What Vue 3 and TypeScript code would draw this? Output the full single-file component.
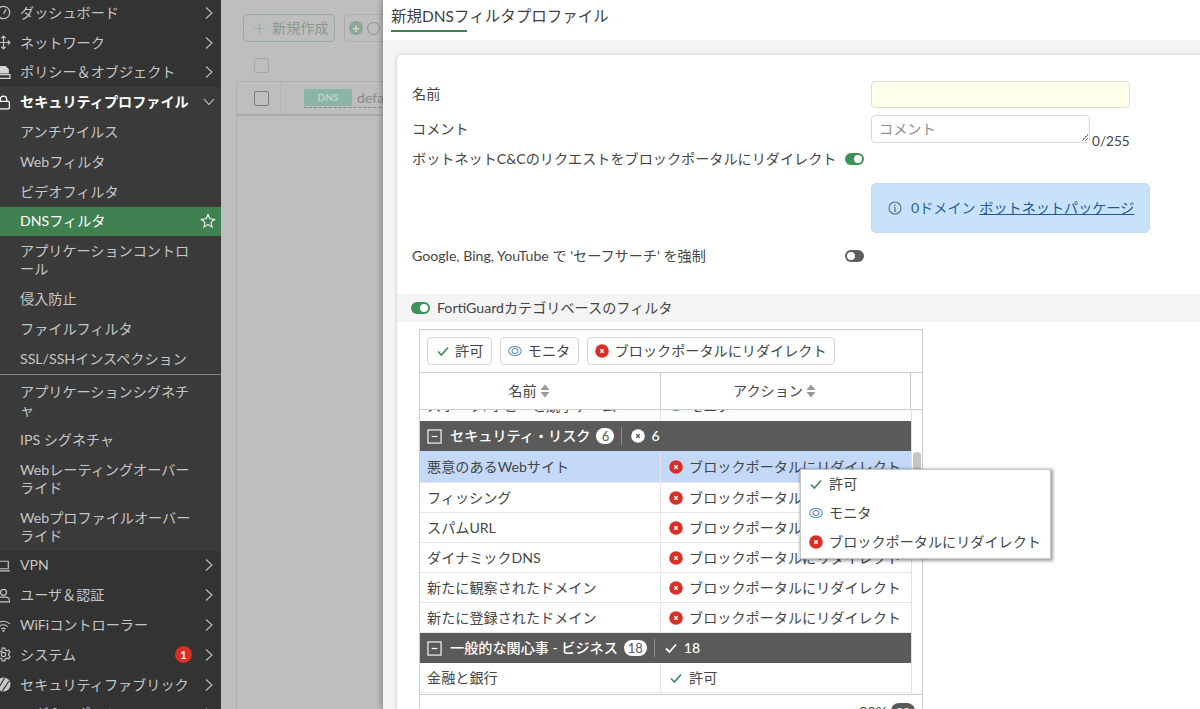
<script setup lang="ts">
interface NavItem {
  label: string
  icon?: string
  badge?: number
}

const topItems: NavItem[] = [
  { label: 'ダッシュボード', icon: 'i-dash' },
  { label: 'ネットワーク', icon: 'i-move' },
  { label: 'ポリシー＆オブジェクト', icon: 'i-policy' },
]
const subItems = [
  'アンチウイルス',
  'Webフィルタ',
  'ビデオフィルタ',
  'DNSフィルタ',
  'アプリケーションコントロール',
  '侵入防止',
  'ファイルフィルタ',
  'SSL/SSHインスペクション',
]
const subItems2 = [
  'アプリケーションシグネチャ',
  'IPS シグネチャ',
  'Webレーティングオーバーライド',
  'Webプロファイルオーバーライド',
]
const bottomItems: NavItem[] = [
  { label: 'VPN', icon: 'i-laptop' },
  { label: 'ユーザ＆認証', icon: 'i-user' },
  { label: 'WiFiコントローラー', icon: 'i-wifi' },
  { label: 'システム', icon: 'i-gear', badge: 1 },
  { label: 'セキュリティファブリック', icon: 'i-fabric' },
  { label: 'ログ＆レポート', icon: 'i-log' },
]
const riskRows = [
  '悪意のあるWebサイト',
  'フィッシング',
  'スパムURL',
  'ダイナミックDNS',
  '新たに観察されたドメイン',
  '新たに登録されたドメイン',
]
</script>

<template>
  <div class="page">
    <svg class="defs" width="0" height="0">
      <symbol id="i-check" viewBox="0 0 14 14">
        <path d="M2 7.5 5.4 11 12 3.5" fill="none" stroke="#3c8a52" stroke-width="1.6" />
      </symbol>
      <symbol id="i-check-w" viewBox="0 0 14 14">
        <path d="M2 7.5 5.4 11 12 3.5" fill="none" stroke="#fff" stroke-width="1.8" />
      </symbol>
      <symbol id="i-eye" viewBox="0 0 16 14">
        <ellipse cx="8" cy="7" rx="7.2" ry="5.2" fill="none" stroke="#5c93c9" stroke-width="1.2" />
        <ellipse cx="8" cy="7" rx="3.4" ry="2.8" fill="none" stroke="#5c93c9" stroke-width="1.2" />
      </symbol>
      <symbol id="i-block" viewBox="0 0 14 14">
        <circle cx="7" cy="7" r="6.8" fill="#d92f25" />
        <path d="M5.3 5.3 8.7 8.7M8.7 5.3 5.3 8.7" stroke="#fff" stroke-width="1.4" />
      </symbol>
      <symbol id="i-block-w" viewBox="0 0 14 14">
        <circle cx="7" cy="7" r="6.8" fill="#fff" />
        <path d="M5.3 5.3 8.7 8.7M8.7 5.3 5.3 8.7" stroke="#5a5a5a" stroke-width="1.4" />
      </symbol>
      <symbol id="i-minus" viewBox="0 0 16 16">
        <rect x="1" y="1" width="14" height="14" fill="none" stroke="#fff" stroke-width="1.2" />
        <path d="M5 8h6" stroke="#fff" stroke-width="1.3" />
      </symbol>
      <symbol id="i-sort" viewBox="0 0 10 14">
        <path d="M5 .5 9.500 6H.5zM5 13.500.5 8h9z" fill="#999" />
      </symbol>
      <symbol id="i-chevron" viewBox="0 0 8 14">
        <path d="M1 1.5 7 7 1 12.5" fill="none" stroke="#bdbdbd" stroke-width="1.1" />
      </symbol>
      <symbol id="i-chevron-d" viewBox="0 0 12 8">
        <path d="M1 1 6 6.5 11 1" fill="none" stroke="#d0d0d0" stroke-width="1.1" />
      </symbol>
      <symbol id="i-dash" viewBox="0 0 14 14">
        <circle cx="7" cy="7" r="5.8" fill="none" stroke="#c4c4c4" stroke-width="1.2" />
        <path d="M7 8 9.5 4" stroke="#c4c4c4" stroke-width="1.2" />
      </symbol>
      <symbol id="i-move" viewBox="0 0 14 14">
        <path d="M7 1v12M1 7h12M5 3l2-2 2 2M5 11l2 2 2-2M3 5 1 7l2 2M11 5l2 2-2 2" fill="none" stroke="#c4c4c4" stroke-width="1.1" />
      </symbol>
      <symbol id="i-policy" viewBox="0 0 14 14">
        <path d="M2 1h7l3 3v4H2z" fill="#d4d4d4" />
        <path d="M1 9h12v3.5H1z" fill="none" stroke="#d4d4d4" stroke-width="1.2" />
      </symbol>
      <symbol id="i-lock" viewBox="0 0 14 14">
        <rect x="1.5" y="6" width="11" height="7" rx="1" fill="none" stroke="#fff" stroke-width="1.2" />
        <path d="M4 6V4a3 3 0 0 1 6 0v2" fill="none" stroke="#fff" stroke-width="1.2" />
      </symbol>
      <symbol id="i-laptop" viewBox="0 0 14 14">
        <path d="M2.5 3h9v7h-9zM1 12h12" fill="none" stroke="#c4c4c4" stroke-width="1.1" />
      </symbol>
      <symbol id="i-user" viewBox="0 0 14 14">
        <circle cx="7" cy="4" r="2.8" fill="none" stroke="#c4c4c4" stroke-width="1.1" />
        <path d="M1.5 13v-1.5a3 3 0 0 1 3-3h5a3 3 0 0 1 3 3V13z" fill="none" stroke="#c4c4c4" stroke-width="1.1" />
      </symbol>
      <symbol id="i-wifi" viewBox="0 0 14 14">
        <path d="M1 5.5a8.500 8.500 0 0 1 12 0M3 8a5.600 5.600 0 0 1 8 0M5 10.300a2.800 2.800 0 0 1 4 0" fill="none" stroke="#c4c4c4" stroke-width="1.1" />
        <circle cx="7" cy="12" r="1" fill="#c4c4c4" />
      </symbol>
      <symbol id="i-gear" viewBox="0 0 14 14">
        <circle cx="7" cy="7" r="2" fill="none" stroke="#c4c4c4" stroke-width="1.1" />
        <path d="M5.800 1h2.400l.4 1.800 1.500.8 1.700-.6 1.200 2.100-1.300 1.200v1.400l1.300 1.200-1.200 2.100-1.700-.6-1.500.8-.4 1.800H5.800l-.4-1.800-1.500-.8-1.700.6L1 9.900l1.300-1.200V7.300L1 6.100l1.200-2.100 1.700.6 1.500-.8z" fill="none" stroke="#c4c4c4" stroke-width="1.1" />
      </symbol>
      <symbol id="i-fabric" viewBox="0 0 14 14">
        <circle cx="7" cy="7" r="6.500" fill="#c8c8c8" />
        <path d="M2 11 8 1M6 13l6-9" stroke="#333" stroke-width="1.1" />
      </symbol>
      <symbol id="i-log" viewBox="0 0 14 14">
        <path d="M2 12h10M3 3h8v7H3z" fill="none" stroke="#c4c4c4" stroke-width="1.1" />
      </symbol>
      <symbol id="i-star" viewBox="0 0 16 16">
        <path d="M8 1.500 9.900 5.800l4.600.5-3.400 3.100 1 4.600L8 11.600 3.900 14l1-4.600L1.500 6.300l4.600-.5z" fill="none" stroke="#fff" stroke-width="1.1" />
      </symbol>
      <symbol id="i-info" viewBox="0 0 14 14">
        <circle cx="7" cy="7" r="6" fill="none" stroke="#5f6f80" stroke-width="1.1" />
        <path d="M7 6.200v4M5.800 10.300h2.400M5.800 6.200H7" fill="none" stroke="#5f6f80" stroke-width="1.1" />
        <circle cx="7" cy="4" r=".8" fill="#5f6f80" />
      </symbol>
      <symbol id="i-plus" viewBox="0 0 14 14">
        <path d="M7 1v12M1 7h12" stroke="#98b5a2" stroke-width="1.3" />
      </symbol>
    </svg>

    <aside class="sidebar">
      <div class="nav-top">
        <div v-for="item in topItems" :key="item.label" class="nav-row">
          <svg class="nav-icon"><use :href="'#' + item.icon" /></svg>
          <span class="nav-label">{{ item.label }}</span>
          <svg class="chevron"><use href="#i-chevron" /></svg>
        </div>
      </div>

      <div class="nav-open">
        <div class="nav-row nav-row-open">
          <svg class="nav-icon"><use href="#i-lock" /></svg>
          <span class="nav-label">セキュリティプロファイル</span>
          <svg class="chevron-down"><use href="#i-chevron-d" /></svg>
        </div>
        <div
          v-for="sub in subItems"
          :key="sub"
          class="sub-row"
          :class="{ active: sub === 'DNSフィルタ' }"
        >
          <span class="sub-label">{{ sub }}</span>
          <svg v-if="sub === 'DNSフィルタ'" class="star"><use href="#i-star" /></svg>
        </div>
        <div class="nav-sep"></div>
        <div v-for="sub in subItems2" :key="sub" class="sub-row">
          <span class="sub-label">{{ sub }}</span>
        </div>
      </div>

      <div v-for="item in bottomItems" :key="item.label" class="nav-row">
        <svg class="nav-icon"><use :href="'#' + item.icon" /></svg>
        <span class="nav-label">{{ item.label }}</span>
        <span v-if="item.badge" class="nav-badge">{{ item.badge }}</span>
        <svg class="chevron"><use href="#i-chevron" /></svg>
      </div>
    </aside>

    <section class="backdrop">
      <div class="toolbar">
        <div class="new-btn">
          <svg class="new-plus"><use href="#i-plus" /></svg>
          <span>新規作成</span>
        </div>
        <div class="search-box">
          <span class="search-add">+</span>
          <span class="search-ring"></span>
        </div>
      </div>
      <div class="bg-check bg-check-head"></div>
      <div class="bg-row">
        <div class="bg-check-cell"><div class="bg-check"></div></div>
        <div class="bg-name">
          <span class="dns-tag">DNS</span>
          <span class="dns-name">default</span>
        </div>
      </div>
      <div class="bg-rest"></div>
    </section>

    <section class="panel">
      <header class="panel-head">
        <h1 class="panel-title">新規DNSフィルタプロファイル</h1>
      </header>
      <div class="panel-body">
        <div class="card">
          <div class="form-row row-name">
            <label>名前</label>
            <span></span>
            <div class="name-input"></div>
          </div>
          <div class="form-row row-comment">
            <label>コメント</label>
            <span></span>
            <div class="comment-wrap">
              <div class="comment-input">コメント<i class="grip"></i></div>
              <span class="counter">0/255</span>
            </div>
          </div>
          <div class="form-row row-botnet">
            <label>ボットネットC&amp;Cのリクエストをブロックポータルにリダイレクト</label>
            <span class="toggle on"></span>
          </div>
          <div class="info-row">
            <div class="info-box">
              <svg class="info-icon"><use href="#i-info" /></svg>
              <span>0ドメイン <a class="info-link">ボットネットパッケージ</a></span>
            </div>
          </div>
          <div class="form-row row-google">
            <label>Google, Bing, YouTube で 'セーフサーチ' を強制</label>
            <span class="toggle off"></span>
          </div>

          <div class="band">
            <span class="toggle on"></span>
            <span>FortiGuardカテゴリベースのフィルタ</span>
          </div>

          <div class="grid">
            <div class="grid-tools">
              <div class="tool-btn"><svg class="ico"><use href="#i-check" /></svg>許可</div>
              <div class="tool-btn"><svg class="ico-eye"><use href="#i-eye" /></svg>モニタ</div>
              <div class="tool-btn"><svg class="ico"><use href="#i-block" /></svg>ブロックポータルにリダイレクト</div>
            </div>
            <div class="grid-head">
              <div class="head-cell">名前<svg class="sort"><use href="#i-sort" /></svg></div>
              <div class="head-cell">アクション<svg class="sort"><use href="#i-sort" /></svg></div>
              <div class="head-end"></div>
            </div>
            <div class="grid-body">
              <div class="rows">
                <div class="row row-cut">
                  <div class="cell">スポーツ/ホビーと競争ゲーム</div>
                  <div class="cell"><svg class="ico-eye"><use href="#i-eye" /></svg>モニタ</div>
                </div>
                <div class="group">
                  <svg class="minus"><use href="#i-minus" /></svg>
                  <span>セキュリティ・リスク</span>
                  <span class="count">6</span>
                  <span class="divider"></span>
                  <svg class="ico"><use href="#i-block-w" /></svg>
                  <span>6</span>
                </div>
                <div
                  v-for="(name, i) in riskRows"
                  :key="name"
                  class="row"
                  :class="{ selected: i === 0 }"
                >
                  <div class="cell">{{ name }}</div>
                  <div class="cell"><svg class="ico"><use href="#i-block" /></svg>ブロックポータルにリダイレクト</div>
                </div>
                <div class="group">
                  <svg class="minus"><use href="#i-minus" /></svg>
                  <span>一般的な関心事 - ビジネス</span>
                  <span class="count">18</span>
                  <span class="divider"></span>
                  <svg class="ico"><use href="#i-check-w" /></svg>
                  <span>18</span>
                </div>
                <div class="row">
                  <div class="cell">金融と銀行</div>
                  <div class="cell"><svg class="ico"><use href="#i-check" /></svg>許可</div>
                </div>
              </div>
              <div class="scroll"><div class="thumb"></div></div>
            </div>
            <div class="grid-foot">90% <span class="foot-pill">88</span></div>

            <div class="menu">
              <div class="menu-item"><svg class="ico"><use href="#i-check" /></svg>許可</div>
              <div class="menu-item"><svg class="ico-eye"><use href="#i-eye" /></svg>モニタ</div>
              <div class="menu-item"><svg class="ico"><use href="#i-block" /></svg>ブロックポータルにリダイレクト</div>
            </div>
          </div>
        </div>
      </div>
    </section>
  </div>
</template>

<style>
html,
body {
  margin: 0;
  height: 709px;
  overflow: hidden;
}
</style>

<style scoped>
.page {
  display: flex;
  width: 1200px;
  height: 709px;
  overflow: hidden;
  font-family: Lato, "Noto Sans CJK JP", sans-serif;
  font-size: 14.13px;
  line-height: 18px;
  color: #454545;
  background: #fff;
}

.defs {
  position: absolute;
}

/* sidebar */
.sidebar {
  flex: 0 0 221px;
  width: 221px;
  height: 709px;
  overflow: hidden;
  background: #333;
  color: #c6c6c6;
}

.nav-top {
  margin-top: -2px;
}

.nav-row {
  display: flex;
  align-items: center;
  height: 29.8px;
}

.nav-icon {
  flex: none;
  width: 15px;
  height: 15px;
  margin-left: -4px;
  margin-right: 9px;
}

.nav-label {
  flex: 1;
  white-space: nowrap;
}

.chevron {
  flex: none;
  width: 8px;
  height: 14px;
  margin-right: 8px;
}

.chevron-down {
  flex: none;
  width: 12px;
  height: 8px;
  margin-right: 6px;
}

.nav-row-open {
  color: #fff;
  font-weight: 700;
}

.nav-open {
  background: #3a3a3a;
}

.sub-row {
  display: flex;
  align-items: center;
  justify-content: space-between;
  padding: 5.9px 0 5.9px 20px;
}

.sub-label {
  width: 174px;
  line-break: anywhere;
}

.sub-row.active {
  background: #3f8150;
  color: #fff;
}

.star {
  flex: none;
  width: 16px;
  height: 16px;
  margin-right: 5px;
}

.nav-sep {
  height: 1px;
  margin: 1px 0 2px;
  background: #808080;
}

.nav-badge {
  width: 17px;
  height: 17px;
  border-radius: 50%;
  background: #d92f25;
  color: #fff;
  font-size: 11px;
  font-weight: 700;
  line-height: 17px;
  text-align: center;
  margin-right: 13px;
}

/* dimmed list page */
.backdrop {
  flex: 0 0 162px;
  width: 162px;
  height: 709px;
  overflow: hidden;
  background: #bebebe;
}

.toolbar {
  display: flex;
  gap: 9px;
  margin: 14px 0 0 22px;
  width: 220px;
}

.new-btn {
  display: flex;
  align-items: center;
  gap: 6px;
  width: 92px;
  height: 28px;
  box-sizing: border-box;
  padding-left: 9px;
  flex: none;
  border: 1px solid #98ad9e;
  border-radius: 4px;
  color: #8a9a90;
}

.new-plus {
  width: 13px;
  height: 13px;
}

.search-box {
  display: flex;
  align-items: center;
  gap: 4px;
  width: 100px;
  height: 28px;
  box-sizing: border-box;
  flex: none;
  padding-left: 4px;
  border: 1px solid #aeaeae;
  border-radius: 4px;
}

.search-add {
  width: 14px;
  height: 14px;
  border-radius: 50%;
  background: #8aa895;
  color: #d8d8d8;
  font-size: 13px;
  font-weight: 700;
  line-height: 14px;
  text-align: center;
}

.search-ring {
  width: 11px;
  height: 11px;
  border-radius: 50%;
  border: 1px solid #8f8f8f;
}

.bg-check {
  width: 13px;
  height: 13px;
  border: 1px solid #a8a8a8;
  border-radius: 2px;
}

.bg-check-head {
  margin: 16px 0 0 33px;
}

.bg-row {
  display: flex;
  align-items: center;
  margin: 8px 0 0 15px;
  height: 35px;
  width: 200px;
  border: 1px solid #b0b0b0;
  border-bottom: 2px solid #aaa;
  box-sizing: border-box;
}

.bg-check-cell {
  flex: none;
  width: 44px;
  height: 100%;
  display: flex;
  align-items: center;
  padding-left: 17px;
  box-sizing: border-box;
  border-right: 1px solid #b4b4b4;
}

.bg-check-cell .bg-check {
  border-color: #7c7c7c;
}

.bg-name {
  display: flex;
  align-items: center;
  gap: 5px;
  margin-left: 23px;
  border-bottom: 1px dashed #888;
}

.dns-tag {
  width: 48px;
  height: 17px;
  background: #8bb5a5;
  color: #c2d4cc;
  font-size: 10px;
  font-weight: 700;
  line-height: 17px;
  text-align: center;
}

.dns-name {
  color: #8a8a8a;
}

.bg-rest {
  height: 600px;
  margin-left: 15px;
  border-left: 1px solid #b0b0b0;
}

/* slide-in panel */
.panel {
  flex: 1;
  min-width: 0;
  height: 709px;
  overflow: hidden;
  background: #f5f5f5;
  box-shadow: -2px 0 5px rgba(0, 0, 0, 0.25);
  position: relative;
}

.panel-head {
  height: 40px;
  background: #fff;
  padding-left: 8px;
  box-sizing: border-box;
}

.panel-title {
  display: inline-block;
  margin: 0;
  padding: 7px 0;
  font-size: 15.5px;
  font-weight: 400;
  line-height: 18px;
  position: relative;
  color: #3f3f3f;
}

.panel-title::after {
  content: "";
  position: absolute;
  left: 0;
  top: 30px;
  width: 76px;
  height: 2px;
  background: #3f8150;
}

.panel-body {
  padding: 15px 0 0 14px;
}

.card {
  position: relative;
  width: 860px;
  height: 700px;
  background: #fff;
  border-radius: 5px 0 0 0;
  box-shadow: 0 0 4px rgba(0, 0, 0, 0.2);
  padding-top: 25px;
  box-sizing: border-box;
}

.form-row {
  display: grid;
  grid-template-columns: 433px 26px auto;
  padding-left: 15px;
  align-items: center;
}

.row-name {
  height: 28px;
}

.name-input {
  width: 259px;
  height: 27px;
  box-sizing: border-box;
  background: #ffffec;
  border: 1px solid #dcdcdc;
  border-radius: 4px;
}

.row-comment {
  height: 28px;
  margin-top: 7px;
}

.comment-wrap {
  display: flex;
  align-items: flex-end;
  gap: 2px;
}

.comment-input {
  position: relative;
  width: 219px;
  height: 28px;
  box-sizing: border-box;
  padding: 4px 7px;
  color: #8e8e8e;
  border: 1px solid #d8d8d8;
  border-radius: 4px;
}

.grip {
  position: absolute;
  right: 1px;
  bottom: 1px;
  width: 7px;
  height: 7px;
  background: linear-gradient(135deg, transparent 50%, #888 50%, #888 60%, transparent 60%, transparent 75%, #888 75%, #888 85%, transparent 85%);
}

.counter {
  position: relative;
  top: 7px;
  font-size: 13.6px;
}

.row-botnet {
  height: 20px;
  margin-top: 6px;
}

.row-botnet label,
.row-google label {
  white-space: nowrap;
}

.toggle {
  position: relative;
  display: block;
  width: 19px;
  height: 12px;
  border-radius: 6px;
}

.toggle::after {
  content: "";
  position: absolute;
  top: 2px;
  width: 8px;
  height: 8px;
  border-radius: 50%;
  background: #fff;
}

.toggle.on {
  background: #3f9257;
}

.toggle.on::after {
  right: 2px;
}

.toggle.off {
  background: #5e5e5e;
}

.toggle.off::after {
  left: 2px;
}

.info-row {
  padding-left: 474px;
  margin-top: 14px;
}

.info-box {
  display: flex;
  align-items: center;
  gap: 9px;
  width: 279px;
  height: 50px;
  box-sizing: border-box;
  padding-left: 16px;
  background: #c8e2fc;
  border: 1px solid #bcdcfa;
  border-radius: 5px;
  color: #28639e;
}

.info-icon {
  flex: none;
  width: 14px;
  height: 14px;
}

.info-link {
  color: #1c5a99;
  text-decoration: underline;
}

.row-google {
  height: 20px;
  margin-top: 13px;
}

.band {
  display: flex;
  align-items: center;
  gap: 7px;
  height: 28px;
  margin-top: 28px;
  padding-left: 14px;
  background: #f4f4f4;
}

/* category table */
.grid {
  position: relative;
  margin: 7px 0 0 22px;
  width: 504px;
  box-sizing: border-box;
  border: 1px solid #ccc;
}

.grid-tools {
  display: flex;
  align-items: center;
  gap: 8px;
  height: 42px;
  padding-left: 7px;
  border-bottom: 1px solid #ccc;
}

.tool-btn {
  display: flex;
  align-items: center;
  gap: 5.5px;
  height: 28px;
  padding: 0 7.5px;
  border: 1px solid #d6d6d6;
  border-radius: 4px;
  background: #fff;
  box-sizing: border-box;
}

.ico {
  flex: none;
  width: 14px;
  height: 14px;
}

.ico-eye {
  flex: none;
  width: 14px;
  height: 14px;
}

.grid-head {
  display: grid;
  grid-template-columns: 241px 250px 1fr;
  height: 36px;
  border-bottom: 1px solid #ccc;
}

.head-cell {
  display: flex;
  align-items: center;
  justify-content: center;
  gap: 3px;
  padding-right: 22px;
  border-right: 1px solid #ccc;
}

.sort {
  width: 10px;
  height: 14px;
}

.grid-body {
  display: flex;
  height: 284px;
  overflow: hidden;
}

.rows {
  flex: 0 0 491px;
  width: 491px;
}

.row {
  display: grid;
  grid-template-columns: 241px 250px;
  height: 30px;
  box-sizing: border-box;
  border-bottom: 1px solid #e6e6e6;
}

.row-cut {
  margin-top: -19px;
  border-bottom: 0;
}

.row.selected {
  height: 32px;
  background: #c3d9f7;
}

.cell {
  display: flex;
  align-items: center;
  gap: 6px;
  padding-left: 7px;
  white-space: nowrap;
  box-sizing: border-box;
  border-right: 1px solid #e6e6e6;
}

.cell + .cell {
  border-right: 0;
  padding-left: 8px;
}

.group {
  display: flex;
  align-items: center;
  gap: 6px;
  height: 30px;
  padding-left: 7px;
  background: #5a5a5a;
  color: #fff;
  font-weight: 500;
  white-space: nowrap;
  box-sizing: border-box;
}

.minus {
  flex: none;
  width: 15px;
  height: 15px;
  margin-right: 2px;
}

.count {
  min-width: 10px;
  height: 16px;
  padding: 0 4px;
  border-radius: 8px;
  background: #fff;
  color: #5a5a5a;
  font-size: 13px;
  font-weight: 400;
  line-height: 16px;
  text-align: center;
}

.divider {
  width: 1px;
  height: 18px;
  margin: 0 3px 0 1px;
  background: #8c8c8c;
}

.scroll {
  flex: 1;
  position: relative;
  border-left: 1px solid #e0e0e0;
}

.thumb {
  position: absolute;
  left: 1px;
  top: 42px;
  width: 8px;
  height: 50px;
  border-radius: 4px;
  background: #c4c4c4;
}

.grid-foot {
  display: flex;
  justify-content: flex-end;
  align-items: center;
  gap: 4px;
  height: 34px;
  padding-right: 7px;
  border-top: 1px solid #ccc;
  background: #fff;
}

.foot-pill {
  padding: 0 5px;
  border-radius: 8px;
  background: #5a5a5a;
  color: #fff;
  font-size: 12px;
}

.menu {
  position: absolute;
  left: 380px;
  top: 139px;
  width: 251px;
  height: 90px;
  box-sizing: border-box;
  background: #fff;
  border: 1px solid #c8c8c8;
  box-shadow: 1px 1px 3px 1px rgba(0, 0, 0, 0.38);
}

.menu-item {
  display: flex;
  align-items: center;
  gap: 6px;
  height: 28.7px;
  padding-left: 8px;
  white-space: nowrap;
}
</style>
